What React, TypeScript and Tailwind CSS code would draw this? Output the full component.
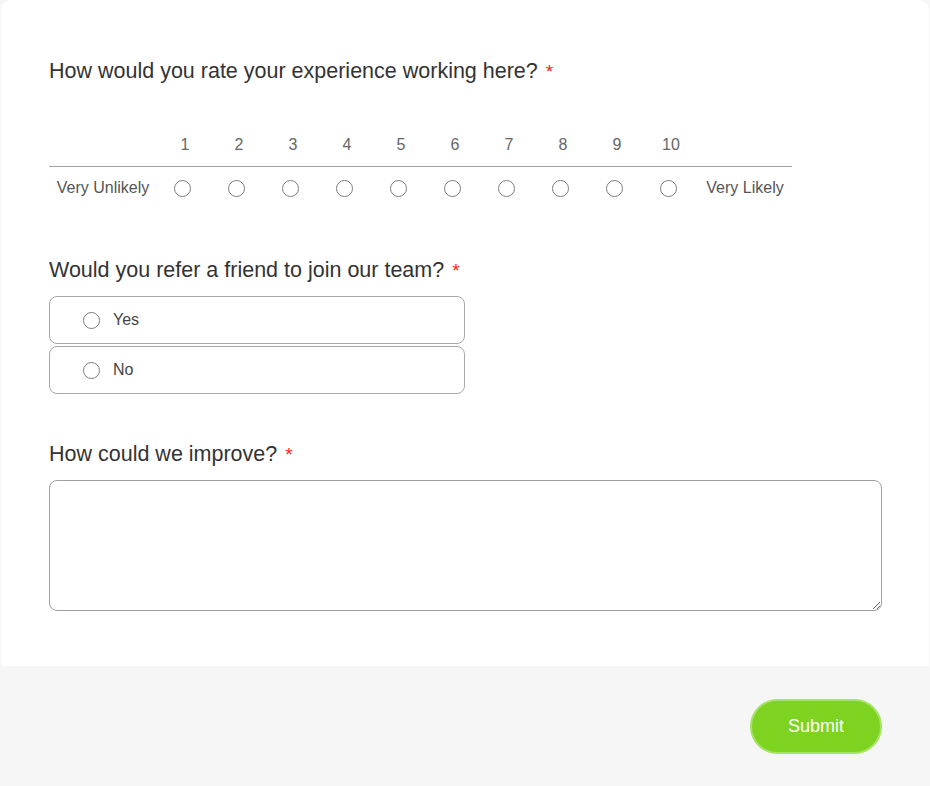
const scale = [1, 2, 3, 4, 5, 6, 7, 8, 9, 10]

function Radio() {
  return <span className="inline-block w-[17px] h-[17px] rounded-full border border-[#7d7d7d] bg-white align-middle" />
}

function Question({ text }: { text: string }) {
  return (
    <h2 className="text-[21.5px] leading-[24px] text-[#333]">
      {text} <span className="ml-[2px] text-[#f22] text-[19px]">*</span>
    </h2>
  )
}

export default function App() {
  return (
    <div className="min-h-[786px] bg-[#f6f6f6] font-['Liberation_Sans',Arial,sans-serif]">
      <div className="mx-[1px] bg-white rounded-t-[10px] pl-[48px] pr-[47px] pt-[59px] pb-[55px]">
        <Question text="How would you rate your experience working here?" />

        <table className="mt-[40px] border-separate border-spacing-0 text-[16px]">
          <thead>
            <tr>
              <th className="w-[106px] h-[43px] border-b border-[#a3a3a3]" />
              {scale.map(n => (
                <th key={n} className="w-[54px] h-[43px] pl-[6px] border-b border-[#a3a3a3] font-normal text-[#666] text-center">
                  {n}
                </th>
              ))}
              <th className="w-[97px] h-[43px] border-b border-[#a3a3a3]" />
            </tr>
          </thead>
          <tbody>
            <tr>
              <td className="h-[42px] pl-[2px] text-center text-[#555] whitespace-nowrap">Very Unlikely</td>
              {scale.map(n => (
                <td key={n} className="h-[42px] text-center">
                  <Radio />
                </td>
              ))}
              <td className="h-[42px] pl-[3px] text-center text-[#555] whitespace-nowrap">Very Likely</td>
            </tr>
          </tbody>
        </table>

        <div className="mt-[49px]">
          <Question text="Would you refer a friend to join our team?" />
          <div className="mt-[13px] w-[416px] flex flex-col gap-[2px]">
            {['Yes', 'No'].map(o => (
              <label key={o} className="h-[48px] flex items-center gap-[13px] pl-[33px] border border-[#a8a8a8] rounded-[8px] text-[16px] text-[#444]">
                <Radio />
                {o}
              </label>
            ))}
          </div>
        </div>

        <div className="mt-[48px]">
          <Question text="How could we improve?" />
          <textarea className="mt-[13px] block w-full h-[131px] border border-[#a0a0a0] rounded-[8px] outline-none" />
        </div>
      </div>

      <div className="flex justify-end pr-[48px] pt-[33px]">
        <button className="w-[132px] h-[55px] rounded-full bg-[#7ed321] border-2 border-[#a5e362] text-white text-[18px]">
          Submit
        </button>
      </div>
    </div>
  )
}
